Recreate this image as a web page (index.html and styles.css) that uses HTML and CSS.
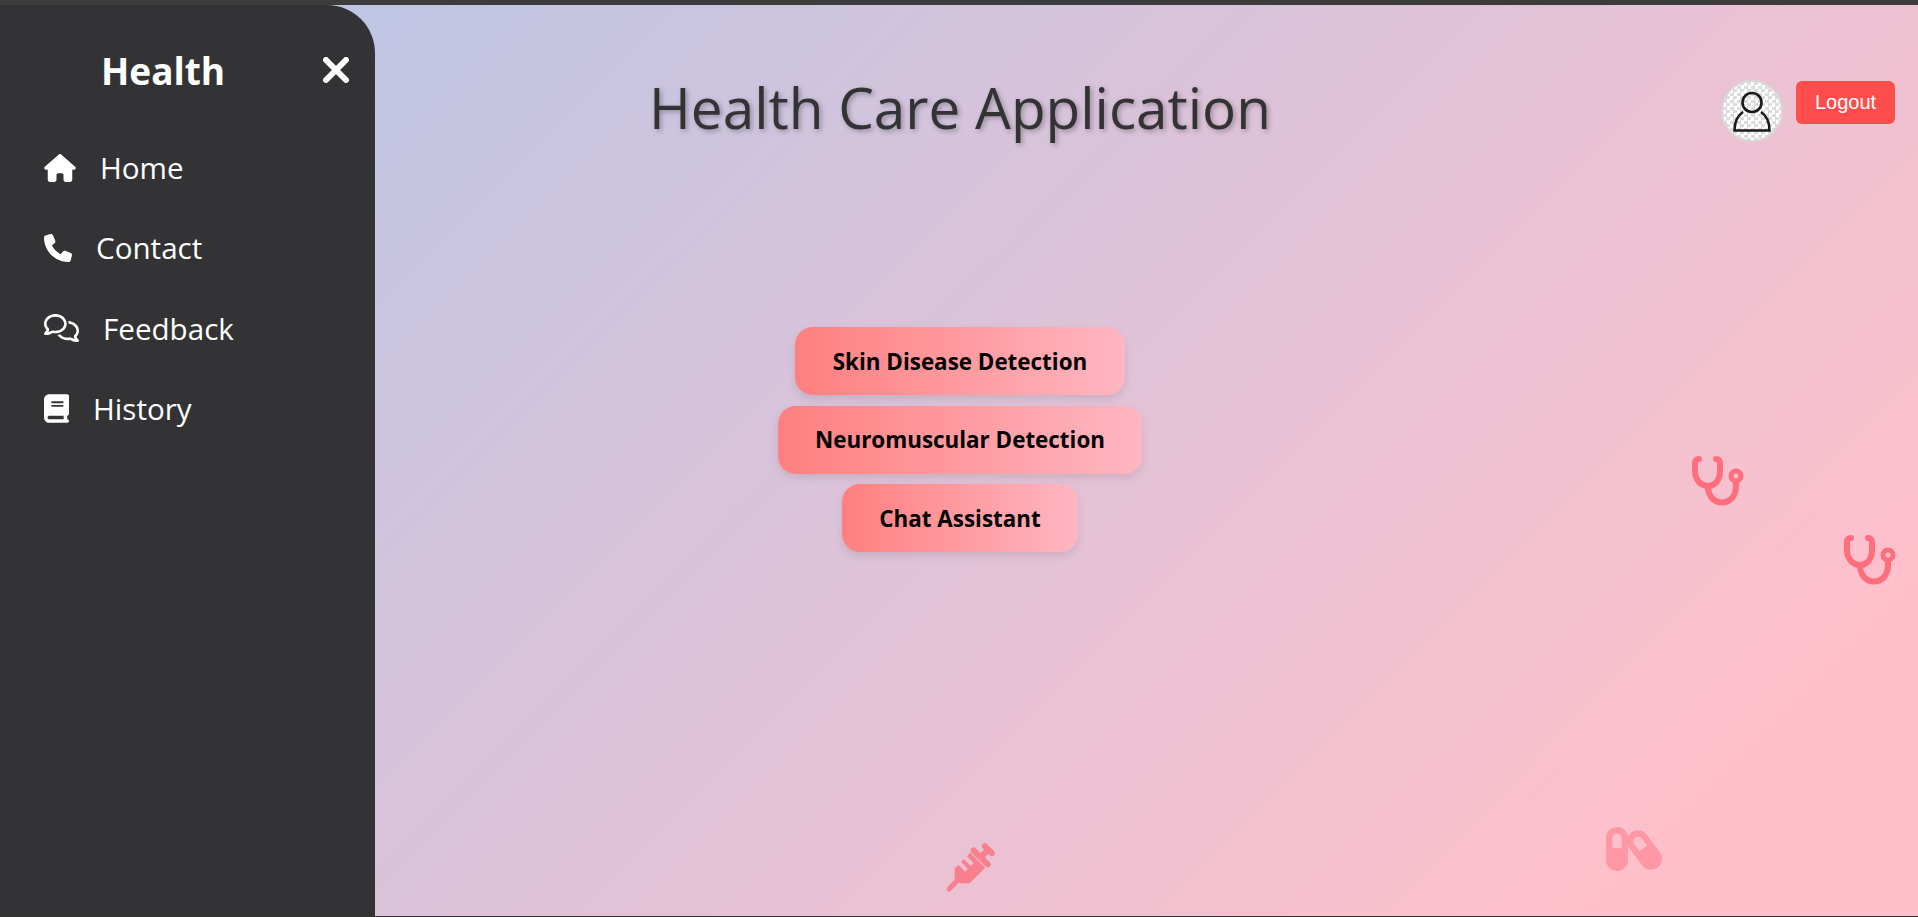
FILE: index.html
```html
<!DOCTYPE html>
<html lang="en">
<head>
    <meta charset="UTF-8">
    <meta name="viewport" content="width=device-width, initial-scale=1.0">
    <title>Health Care Application</title>
    <link rel="stylesheet" href="styles.css">
</head>
<body>
    <div class="topStrip"></div>

    <div class="page">
        <!-- open drawer, lies over the page -->
        <aside class="sidebar">
            <div class="sidebarHead">
                <span class="brand">Health</span>
                <svg class="closeIcon" viewBox="0 0 26 26"><path d="M3 3 23 23M23 3 3 23"/></svg>
            </div>
            <nav class="navList">
                <a class="navItem" href="#">
                    <svg class="navIcon" width="32" height="28" viewBox="0 0 576 512"><path d="M575.8 255.5c0 18-15 32.1-32 32.1h-32l.7 160.2c0 2.7-.2 5.400-.5 8.100V472c0 22.100-17.900 40-40 40H456c-1.100 0-2.200 0-3.300-.1c-1.400 .1-2.800 .1-4.200 .1H416 392c-22.100 0-40-17.900-40-40V448 384c0-17.700-14.300-32-32-32H256c-17.700 0-32 14.300-32 32v64 24c0 22.100-17.900 40-40 40H160 128.100c-1.500 0-3-.1-4.500-.2c-1.200 .1-2.400 .2-3.600 .2H104c-22.100 0-40-17.900-40-40V360c0-.9 0-1.900 .1-2.800V287.600H32c-18 0-32-14-32-32.100c0-9 3-17 10-24L266.400 8c7-7 15-8 22-8s15 2 21 7L564.800 231.500c8 7 12 15 11 24z"/></svg>
                    Home
                </a>
                <a class="navItem" href="#">
                    <svg class="navIcon" width="28" height="28" viewBox="0 0 512 512"><path d="M164.900 24.600c-7.700-18.600-28-28.500-47.400-23.200l-88 24C12.100 30.200 0 46 0 64C0 311.400 200.600 512 448 512c18 0 33.800-12.100 38.600-29.500l24-88c5.300-19.400-4.600-39.700-23.200-47.400l-96-40c-16.300-6.800-35.200-2.100-46.300 11.600L304.700 368C234.300 334.700 177.300 277.700 144 207.300L193.300 167c13.700-11.200 18.400-30 11.600-46.300l-40-96z"/></svg>
                    Contact
                </a>
                <a class="navItem" href="#">
                    <svg class="navIcon" width="35" height="28" viewBox="0 0 640 512"><path d="M88.200 309.100c9.800-18.300 6.800-40.800-7.500-55.800C59.400 230.900 48 204 48 176c0-63.500 63.800-128 160-128s160 64.500 160 128s-63.800 128-160 128c-13.100 0-25.800-1.300-37.800-3.600c-10.400-2-21.200-.6-30.700 4.200c-4.100 2.100-8.300 4.100-12.600 6c-16 7.200-32.900 13.500-49.900 18c2.800-4.600 5.400-9.100 7.900-13.600c1.100-1.900 2.200-3.900 3.200-5.900zM0 176c0 41.800 17.200 80.100 45.900 110.300c-.9 1.700-1.900 3.500-2.800 5.100c-10.300 18.400-22.300 36.500-36.600 52.100c-6.600 7-8.300 17.200-4.600 25.900C5.800 378.300 14.400 384 24 384c43 0 86.500-13.300 122.700-29.700c4.800-2.200 9.600-4.500 14.200-6.800c15.100 3 30.900 4.500 47.100 4.500c114.900 0 208-78.800 208-176S322.900 0 208 0S0 78.800 0 176zM432 480c16.200 0 31.900-1.600 47.100-4.500c4.600 2.300 9.400 4.600 14.200 6.800C529.500 498.700 573 512 616 512c9.600 0 18.200-5.700 22-14.500c3.800-8.800 2-19-4.600-25.900c-14.200-15.600-26.200-33.700-36.600-52.100c-.9-1.700-1.900-3.400-2.800-5.100C622.800 384.100 640 345.800 640 304c0-94.400-87.900-171.500-198.200-175.800c4.100 15.200 6.200 31.200 6.200 47.800l0 .6c87.200 6.700 144 67.500 144 127.400c0 28-11.400 54.900-32.700 77.200c-14.300 15-17.300 37.600-7.500 55.800c1.100 2 2.200 4 3.200 5.900c2.500 4.500 5.200 9 7.900 13.600c-17-4.500-33.900-10.700-49.900-18c-4.300-1.900-8.500-3.900-12.600-6c-9.500-4.800-20.300-6.200-30.700-4.200c-12.100 2.400-24.700 3.600-37.800 3.600c-61.700 0-110-26.500-136.800-62.300c-16 5.400-32.800 9.400-50 11.800C279 439.800 350 480 432 480z"/></svg>
                    Feedback
                </a>
                <a class="navItem" href="#">
                    <svg class="navIcon" width="25" height="29" viewBox="0 0 448 512"><path d="M96 0C43 0 0 43 0 96V416c0 53 43 96 96 96H384h32c17.700 0 32-14.300 32-32s-14.300-32-32-32V384c17.700 0 32-14.300 32-32V32c0-17.700-14.300-32-32-32H384 96zm0 384H352v64H96c-17.700 0-32-14.300-32-32s14.300-32 32-32zm32-240c0-8.800 7.200-16 16-16H336c8.800 0 16 7.200 16 16s-7.200 16-16 16H144c-8.800 0-16-7.200-16-16zm16 48H336c8.800 0 16 7.200 16 16s-7.200 16-16 16H144c-8.800 0-16-7.200-16-16s7.200-16 16-16z"/></svg>
                    History
                </a>
            </nav>
        </aside>

        <header class="topBar">
            <h1 class="pageTitle">Health Care Application</h1>
            <div class="userBox">
                <div class="avatar">
                    <svg width="40" height="42" viewBox="0 0 40 42"><circle cx="20" cy="12.500" r="9.500"/><path d="M11 22C5 26 2.500 32 2.500 40.500H37.500C37.500 32 35 26 29 22"/></svg>
                </div>
                <button class="logoutBtn">Logout</button>
            </div>
        </header>

        <main class="actions">
            <button class="actionBtn">Skin Disease Detection</button>
            <button class="actionBtn">Neuromuscular Detection</button>
            <button class="actionBtn">Chat Assistant</button>
        </main>

        <!-- floating decoration -->
        <svg class="floatIcon stethOne" width="52" height="50" viewBox="0 0 52 50"><g class="steth"><path d="M7 3C4 3 3 5 3 8V15C3 24 9 30 16 30S28 24 28 15V8C28 5 27 3 24 3"/><path d="M16 30C16 40 22 46.500 30 46.500S44 40 44 30V26"/><circle class="stethRing" cx="44" cy="20" r="5"/></g></svg>
        <svg class="floatIcon stethTwo" width="52" height="50" viewBox="0 0 52 50"><g class="steth"><path d="M7 3C4 3 3 5 3 8V15C3 24 9 30 16 30S28 24 28 15V8C28 5 27 3 24 3"/><path d="M16 30C16 40 22 46.500 30 46.500S44 40 44 30V26"/><circle class="stethRing" cx="44" cy="20" r="5"/></g></svg>
        <svg class="floatIcon syringe" width="60" height="60" viewBox="0 0 60 60"><g transform="rotate(45 30 30)"><rect x="22" y="1" width="16" height="6" rx="3"/><rect x="27" y="5" width="6" height="10"/><rect x="17" y="12" width="26" height="6" rx="3"/><path d="M19.500 19H40.500V41L34 48H26L19.500 41V36H29V32H19.500V28H29V24H19.500Z"/><rect x="27.500" y="46" width="5" height="16" rx="2.500"/></g></svg>
        <svg class="floatIcon pills" width="60" height="46" viewBox="0 0 60 46"><path fill-rule="evenodd" d="M11 0A11 11 0 0 1 22 11V33A11 11 0 0 1 0 33V11A11 11 0 0 1 11 0ZM11 6.500A4.700 4.700 0 0 0 6.300 11.200V21H15.700V11.200A4.700 4.700 0 0 0 11 6.500Z"/><g transform="translate(-1.500 0) rotate(-37 40 23)"><path fill-rule="evenodd" d="M40 1A11 11 0 0 1 51 12V34A11 11 0 0 1 29 34V12A11 11 0 0 1 40 1ZM40 7.500A4.700 4.700 0 0 0 35.300 12.200V21H44.700V12.200A4.700 4.700 0 0 0 40 7.500Z"/></g></svg>
    </div>
</body>
</html>
```

FILE: styles.css
```css
* {
    box-sizing: border-box;
}
html, body {
    height: 100%;
}
body {
    margin: 0;
    display: flex;
    flex-direction: column;
    overflow: hidden;
    background-color: #333;
    font-family: "Open Sans", "Noto Sans", sans-serif;
    padding-bottom: 1px;
}
.topStrip {
    height: 5px;
    background-color: #3c3c3c;
    flex-shrink: 0;
}
.page {
    position: relative;
    flex: 1;
    background: linear-gradient(135deg, #b4c6e8 0%, #ffc0cb 88%);
    overflow: hidden;
}
.sidebar {
    position: absolute;
    top: 0;
    left: 0;
    bottom: 0;
    width: 375px;
    padding: 0 20px 0 44px;
    background-color: #333335;
    border-top-right-radius: 48px;
    color: white;
}
.sidebarHead {
    height: 123px;
    display: flex;
    align-items: center;
    justify-content: space-between;
    padding: 7px 6px 0 57px;
}
.brand {
    font-size: 37px;
    font-weight: 700;
}
.closeIcon {
    width: 26px;
    height: 26px;
    fill: none;
    stroke: white;
    stroke-width: 6;
    stroke-linecap: round;
}
.navList {
    display: flex;
    flex-direction: column;
    gap: 30.300px;
    margin-top: 14.500px;
}
.navItem {
    height: 50px;
    display: flex;
    align-items: center;
    gap: 24px;
    color: white;
    text-decoration: none;
    font-size: 29.600px;
}
.navIcon {
    fill: white;
}
.topBar {
    height: 200px;
    position: relative;
    display: flex;
    justify-content: center;
    padding: 64px 0 0 2px;
}
.pageTitle {
    margin: 0;
    font-size: 56.700px;
    font-weight: 400;
    line-height: 76px;
    color: #333335;
    text-shadow: 2px 2px 5px rgba(0, 0, 0, 0.3);
}
/* sits on the right of the centered title */
.userBox {
    position: absolute;
    top: 76px;
    right: 23px;
    display: flex;
    align-items: flex-start;
    gap: 13px;
}
.avatar {
    width: 62px;
    height: 62px;
    margin-top: -1px;
    display: flex;
    align-items: center;
    justify-content: center;
    border: 2px solid #d8d8d8;
    border-radius: 50%;
    background: repeating-conic-gradient(#dcdcdc 0 25%, #ffffff 0 50%) 0 0 / 7px 7px;
}
.avatar svg {
    fill: none;
    stroke: #1a1a1a;
    stroke-width: 2.600;
}
.logoutBtn {
    width: 99px;
    height: 43px;
    border: none;
    border-radius: 6px;
    background-color: #ff4d4d;
    color: white;
    font-family: "Liberation Sans", Arial, sans-serif;
    font-size: 20px;
}
.actions {
    display: flex;
    flex-direction: column;
    align-items: center;
    gap: 10.500px;
    padding: 122px 0 0 2px;
}
.actionBtn {
    height: 68px;
    padding: 0 37.500px;
    border: none;
    border-radius: 18px;
    background: linear-gradient(90deg, #ff7f7f, #ffb6c1);
    box-shadow: 0 4px 8px rgba(0, 0, 0, 0.1);
    color: black;
    font-family: "Open Sans", "Noto Sans", sans-serif;
    font-size: 22.400px;
    font-weight: 700;
}
.floatIcon {
    position: absolute;
}
.steth {
    fill: none;
    stroke: #ff6e7c;
    stroke-width: 6;
    stroke-linecap: round;
}
.stethRing {
    stroke-width: 5;
}
.stethOne {
    left: 1692px;
    top: 451px;
}
.stethTwo {
    left: 1844px;
    top: 530px;
}
.syringe {
    left: 940px;
    top: 833px;
    fill: #f77f8e;
}
.pills {
    left: 1606px;
    top: 822px;
    fill: #ff98a4;
}
```
